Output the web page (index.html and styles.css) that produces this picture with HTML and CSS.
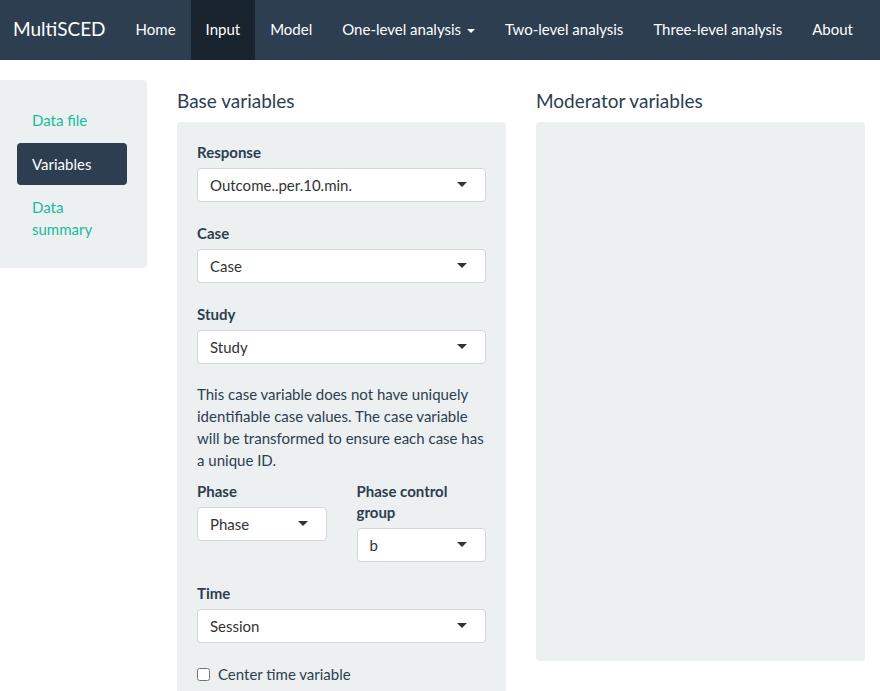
FILE: index.html
```html
<!DOCTYPE html>
<html>
<head>
<meta charset="utf-8">
<title>MultiSCED</title>
<link rel="stylesheet" href="styles.css">
</head>
<body>
<nav class="navbar">
  <span class="brand">MultiSCED</span>
  <ul class="nav">
    <li><a>Home</a></li>
    <li class="active"><a>Input</a></li>
    <li><a>Model</a></li>
    <li><a>One-level analysis <span class="caret"></span></a></li>
    <li><a>Two-level analysis</a></li>
    <li><a>Three-level analysis</a></li>
    <li><a>About</a></li>
  </ul>
</nav>
<main class="page">
  <aside class="side-well">
    <ul class="pills">
      <li><a>Data file</a></li>
      <li class="active"><a>Variables</a></li>
      <li><a>Data summary</a></li>
    </ul>
  </aside>
  <section class="col">
    <h4 class="heading">Base variables</h4>
    <div class="well base-well">
      <div class="form-group">
        <label class="lbl">Response</label>
        <div class="select">Outcome..per.10.min.</div>
      </div>
      <div class="form-group">
        <label class="lbl">Case</label>
        <div class="select">Case</div>
      </div>
      <div class="form-group">
        <label class="lbl">Study</label>
        <div class="select">Study</div>
      </div>
      <p class="help">This case variable does not have uniquely identifiable case values. The case variable will be transformed to ensure each case has a unique ID.</p>
      <div class="row">
        <div class="half">
          <label class="lbl">Phase</label>
          <div class="select">Phase</div>
        </div>
        <div class="half">
          <label class="lbl">Phase control group</label>
          <div class="select">b</div>
        </div>
      </div>
      <div class="form-group">
        <label class="lbl">Time</label>
        <div class="select">Session</div>
      </div>
      <label class="check"><input type="checkbox"><span>Center time variable</span></label>
    </div>
  </section>
  <section class="col">
    <h4 class="heading">Moderator variables</h4>
    <div class="well mod-well"></div>
  </section>
</main>
</body>
</html>
```

FILE: styles.css
```css
* { box-sizing: border-box; }
html, body { margin: 0; padding: 0; }
body {
  font-family: Lato, "Open Sans", "Liberation Sans", sans-serif;
  font-size: 15px;
  line-height: 1.428571;
  color: #2c3e50;
  background: #fff;
  overflow: hidden;
}
.navbar {
  height: 60px;
  background: #2c3e50;
  display: flex;
  align-items: stretch;
}
.brand {
  color: #fff;
  font-size: 19px;
  line-height: 58px;
  padding: 0 15px 0 13px;
}
.nav {
  list-style: none;
  margin: 0;
  padding: 0;
  display: flex;
}
.nav li a {
  display: block;
  height: 60px;
  color: #fff;
  line-height: 58px;
  padding: 0 15px;
}
.nav li.active a { background: #1a242f; }
.caret {
  display: inline-block;
  width: 0;
  height: 0;
  margin-left: 2px;
  vertical-align: middle;
  border-top: 4px solid #fff;
  border-left: 4px solid transparent;
  border-right: 4px solid transparent;
}
.page {
  display: flex;
  align-items: flex-start;
  gap: 30px;
  padding: 20px 15px 0 0;
}
.side-well {
  width: 147px;
  flex: none;
  background: #ecf0f1;
  border-radius: 0 4px 4px 0;
  padding: 19px 20px 18px 17px;
}
.pills {
  list-style: none;
  margin: 0;
  padding: 0;
}
.pills li + li { margin-top: 2px; }
.pills li a {
  display: block;
  padding: 10px 15px;
  line-height: 21.5px;
  color: #18bc9c;
  border-radius: 4px;
}
.pills li:first-child a,
.pills li.active a { line-height: 22px; }
.pills li.active a {
  background: #2c3e50;
  color: #fff;
}
.col { flex: 1; min-width: 0; }
.heading {
  font-size: 19px;
  font-weight: 400;
  line-height: 21px;
  margin: 10px 0 11px;
  color: #2c3e50;
}
.well {
  background: #ecf0f1;
  border-radius: 4px;
}
.base-well {
  padding: 19px 20px 40px;
}
.mod-well { height: 539px; }
.form-group { margin-bottom: 20px; }
.lbl {
  display: block;
  font-weight: 700;
  line-height: 22px;
  margin-bottom: 5px;
}
.select {
  position: relative;
  height: 34px;
  background: #fff;
  border: 1px solid #d2d6d8;
  border-radius: 4px;
  padding: 0 30px 0 12px;
  line-height: 32px;
  color: #333;
  white-space: nowrap;
}
.select::after {
  content: "";
  position: absolute;
  right: 18px;
  top: 50%;
  margin-top: -3px;
  border-top: 5px solid #333;
  border-left: 5px solid transparent;
  border-right: 5px solid transparent;
}
.help {
  margin: -1px 0 10px;
  line-height: 22px;
}
.row {
  display: flex;
  gap: 30px;
  margin-bottom: 20px;
}
.half { flex: 1; }
.half .lbl { line-height: 21px; }
.check {
  display: flex;
  align-items: center;
  line-height: 22px;
}
.check input {
  margin: 0 8px 0 0;
  width: 13px;
  height: 13px;
}
```
